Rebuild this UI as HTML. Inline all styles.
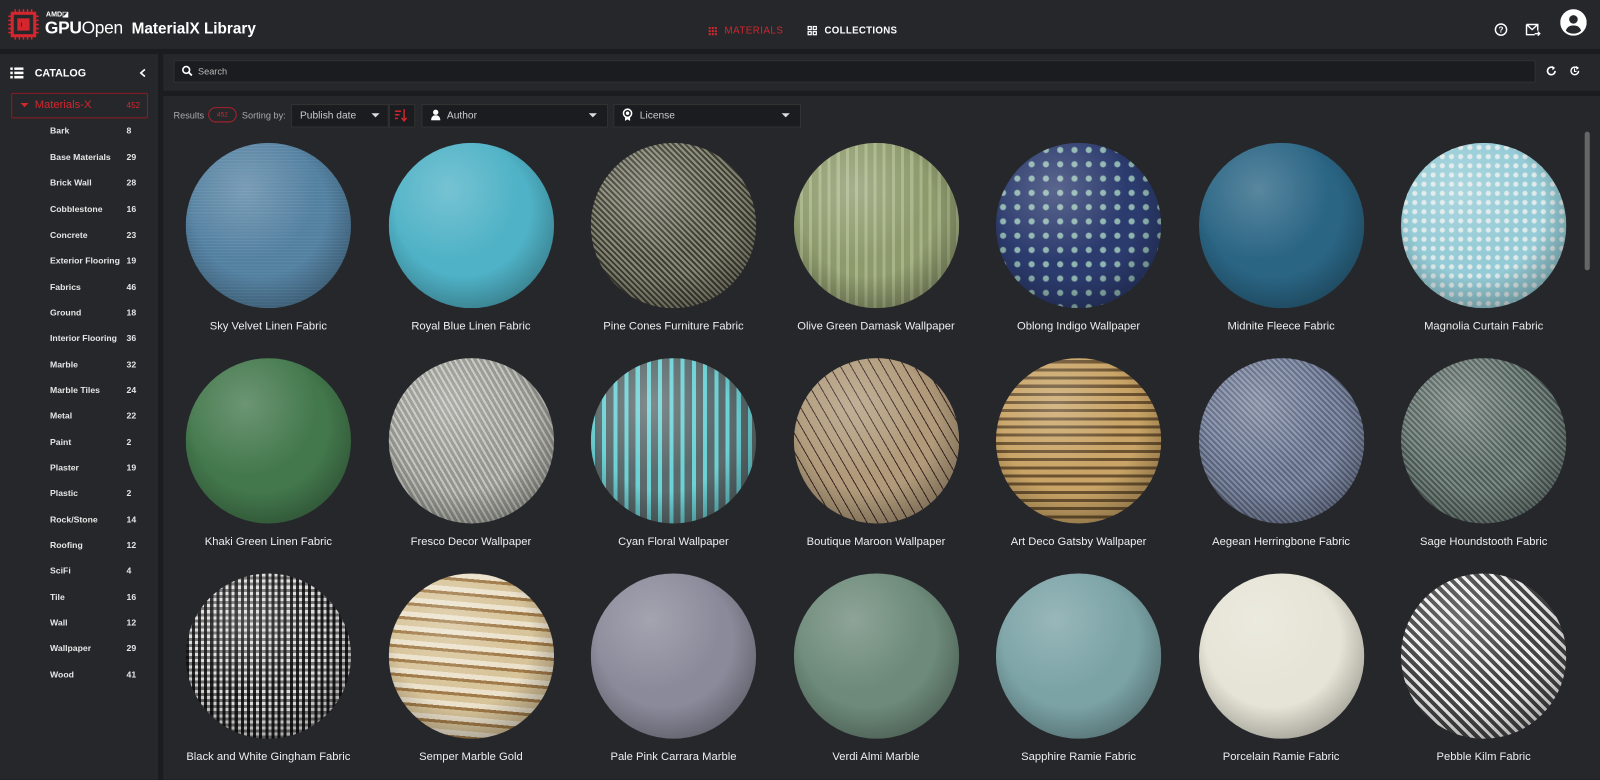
<!DOCTYPE html>
<html><head><meta charset="utf-8">
<style>
*{box-sizing:border-box;margin:0;padding:0}
html,body{width:1600px;height:779px;overflow:hidden;background:#1b1c1f}
#w{position:absolute;left:0;top:0;width:1568px;height:764px;transform:scale(1.0204);transform-origin:0 0;font-family:"Liberation Sans",sans-serif;color:#e8e8e8}
.hdr{position:absolute;left:0;top:0;width:1568px;height:48px;background:#26272b}
.side{position:absolute;left:0;top:53px;width:155px;height:711px;background:#26272b}
.srch{position:absolute;left:160px;top:53px;width:1408px;height:36px;background:#26272b}
.main{position:absolute;left:160px;top:94px;width:1408px;height:670px;background:#26272b}
.abs{position:absolute}
.cat{position:absolute;left:49px;font-size:8.5px;font-weight:bold;color:#e6e6e6}
.cnt{position:absolute;left:124px;font-size:8.5px;font-weight:bold;color:#e6e6e6}
.sp{position:absolute;width:162px;height:162px;border-radius:50%}
.lbl{position:absolute;width:200px;text-align:center;font-size:11px;color:#eee}
.sel{position:absolute;top:102px;height:23px;background:#1b1c1f;border:1px solid #333;font-size:10px;color:#ccc;line-height:21px;padding-left:8px}
.tri{position:absolute;width:0;height:0;border-left:4px solid transparent;border-right:4px solid transparent;border-top:4px solid #ddd}
</style></head><body><div id="w">
<div class="hdr"></div>
<svg class="abs" style="left:8px;top:9px" width="30" height="30" viewBox="0 0 30 30">
<rect x="4" y="4" width="22" height="22" fill="none" stroke="#d4262c" stroke-width="3"/>
<rect x="9" y="9" width="12" height="12" fill="#d4262c"/>
<g stroke="#d4262c" stroke-width="1.5">
<path d="M7 0v3M11 0v3M15 0v3M19 0v3M23 0v3M7 27v3M11 27v3M15 27v3M19 27v3M23 27v3M0 7h3M0 11h3M0 15h3M0 19h3M0 23h3M27 7h3M27 11h3M27 15h3M27 19h3M27 23h3"/></g>
<path d="M13 13v4" stroke="#26272b" stroke-width="1"/></svg>
<div class="abs" style="left:45px;top:10px;font-size:7px;font-weight:bold;color:#fff">AMD◪</div>
<div class="abs" style="left:44px;top:18px;font-size:17px;color:#fff;letter-spacing:-0.3px"><b>GPU</b>Open</div>
<div class="abs" style="left:129px;top:20px;font-size:15px;font-weight:bold;color:#fff">MaterialX Library</div>
<div class="abs" style="left:694px;top:26px;width:9px;height:9px;background:radial-gradient(circle,#d4262c 1px,transparent 1.2px) 0 0/3px 3px"></div>
<div class="abs" style="left:710px;top:25px;font-size:9.5px;color:#d4262c;letter-spacing:.5px">MATERIALS</div>
<svg class="abs" style="left:791px;top:25px" width="10" height="10"><g fill="none" stroke="#fff" stroke-width="1.2"><rect x="1" y="1" width="3" height="3"/><rect x="6" y="1" width="3" height="3"/><rect x="1" y="6" width="3" height="3"/><rect x="6" y="6" width="3" height="3"/></g></svg>
<div class="abs" style="left:808px;top:25px;font-size:9.5px;font-weight:bold;color:#fff;letter-spacing:.3px">COLLECTIONS</div>
<svg class="abs" style="left:1464px;top:22px" width="14" height="14"><circle cx="7" cy="7" r="5.5" fill="none" stroke="#fff" stroke-width="1.4"/><text x="7" y="10" font-size="8" font-weight="bold" fill="#fff" text-anchor="middle" font-family="Liberation Sans">?</text></svg>
<svg class="abs" style="left:1495px;top:23px" width="15" height="13"><path d="M1 1h11v6M1 1v10h8M1 1l5.5 5 5.5-5" fill="none" stroke="#fff" stroke-width="1.4"/><path d="M9 10h5M12 8l2 2-2 2" fill="none" stroke="#fff" stroke-width="1.3"/></svg>
<svg class="abs" style="left:1529px;top:9px" width="26" height="26"><circle cx="13" cy="13" r="13" fill="#fff"/><circle cx="13" cy="10" r="4.2" fill="#26272b"/><path d="M5.5 21c1.5-4 4-5 7.5-5s6 1 7.5 5c-2 2-4.5 3-7.5 3s-5.5-1-7.5-3z" fill="#26272b"/></svg>

<div class="side"></div>
<svg class="abs" style="left:10px;top:66px" width="13" height="11"><g fill="#fff"><rect x="0" y="0" width="2.5" height="2.5"/><rect x="4" y="0" width="9" height="2.5"/><rect x="0" y="4.2" width="2.5" height="2.5"/><rect x="4" y="4.2" width="9" height="2.5"/><rect x="0" y="8.4" width="2.5" height="2.5"/><rect x="4" y="8.4" width="9" height="2.5"/></g></svg>
<div class="abs" style="left:34px;top:66px;font-size:10.5px;font-weight:bold;color:#fff">CATALOG</div>
<svg class="abs" style="left:136px;top:67px" width="8" height="9"><path d="M6 1L2 4.5 6 8" fill="none" stroke="#fff" stroke-width="1.6"/></svg>
<div class="abs" style="left:11px;top:91px;width:134px;height:25px;border:1px solid #8b1e24;border-radius:2px"></div>
<div class="tri" style="left:20px;top:101px;border-top-color:#d4262c"></div>
<div class="abs" style="left:34px;top:97px;font-size:11px;color:#d4262c">Materials-X</div>
<div class="abs" style="left:124px;top:99px;font-size:8px;color:#d4262c">452</div>
<div class="cat" style="top:123px">Bark</div><div class="cnt" style="top:123px">8</div>
<div class="cat" style="top:149px">Base Materials</div><div class="cnt" style="top:149px">29</div>
<div class="cat" style="top:174px">Brick Wall</div><div class="cnt" style="top:174px">28</div>
<div class="cat" style="top:200px">Cobblestone</div><div class="cnt" style="top:200px">16</div>
<div class="cat" style="top:225px">Concrete</div><div class="cnt" style="top:225px">23</div>
<div class="cat" style="top:250px">Exterior Flooring</div><div class="cnt" style="top:250px">19</div>
<div class="cat" style="top:276px">Fabrics</div><div class="cnt" style="top:276px">46</div>
<div class="cat" style="top:301px">Ground</div><div class="cnt" style="top:301px">18</div>
<div class="cat" style="top:326px">Interior Flooring</div><div class="cnt" style="top:326px">36</div>
<div class="cat" style="top:352px">Marble</div><div class="cnt" style="top:352px">32</div>
<div class="cat" style="top:377px">Marble Tiles</div><div class="cnt" style="top:377px">24</div>
<div class="cat" style="top:402px">Metal</div><div class="cnt" style="top:402px">22</div>
<div class="cat" style="top:428px">Paint</div><div class="cnt" style="top:428px">2</div>
<div class="cat" style="top:453px">Plaster</div><div class="cnt" style="top:453px">19</div>
<div class="cat" style="top:478px">Plastic</div><div class="cnt" style="top:478px">2</div>
<div class="cat" style="top:504px">Rock/Stone</div><div class="cnt" style="top:504px">14</div>
<div class="cat" style="top:529px">Roofing</div><div class="cnt" style="top:529px">12</div>
<div class="cat" style="top:554px">SciFi</div><div class="cnt" style="top:554px">4</div>
<div class="cat" style="top:580px">Tile</div><div class="cnt" style="top:580px">16</div>
<div class="cat" style="top:605px">Wall</div><div class="cnt" style="top:605px">12</div>
<div class="cat" style="top:630px">Wallpaper</div><div class="cnt" style="top:630px">29</div>
<div class="cat" style="top:656px">Wood</div><div class="cnt" style="top:656px">41</div>

<div class="srch"></div>
<div class="abs" style="left:170px;top:59px;width:1335px;height:22px;background:#1b1c1f;border:1px solid #333"></div>
<svg class="abs" style="left:178px;top:64px" width="11" height="11"><circle cx="4.5" cy="4.5" r="3.3" fill="none" stroke="#fff" stroke-width="1.6"/><path d="M7 7l3 3" stroke="#fff" stroke-width="1.8"/></svg>
<div class="abs" style="left:194px;top:65px;font-size:9px;color:#bbb">Search</div>
<svg class="abs" style="left:1515px;top:64px" width="11" height="11"><path d="M9 5.5A3.7 3.7 0 1 1 7.5 2.5" fill="none" stroke="#fff" stroke-width="1.6"/><path d="M6 0.5l3 2-2.5 2.5z" fill="#fff"/></svg>
<svg class="abs" style="left:1538px;top:64px" width="11" height="11"><path d="M9 5.5A3.7 3.7 0 1 1 7.5 2.5" fill="none" stroke="#fff" stroke-width="1.4"/><path d="M5 3v3h2" fill="none" stroke="#fff" stroke-width="1.1"/><path d="M6.5 0.5l3 2-2.5 2z" fill="#fff"/></svg>

<div class="main"></div>
<div class="abs" style="left:170px;top:108px;font-size:9px;color:#aaa">Results</div>
<div class="abs" style="left:204px;top:105px;width:28px;height:15px;border:1px solid #a8222a;border-radius:8px;font-size:6.5px;color:#d4262c;text-align:center;line-height:13px">452</div>
<div class="abs" style="left:237px;top:108px;font-size:9px;color:#aaa">Sorting by:</div>
<div class="sel" style="left:285px;width:96px">Publish date</div>
<div class="tri" style="left:364px;top:111px"></div>
<div class="abs" style="left:381px;top:102px;width:26px;height:23px;background:#1b1c1f;border:1px solid #333"></div>
<svg class="abs" style="left:386px;top:106px" width="14" height="14"><path d="M1 3h6M1 6.5h4.5M1 10h3" stroke="#d4262c" stroke-width="1.5"/><path d="M10 1v11M7.5 9.5L10 12.5l2.5-3" fill="none" stroke="#d4262c" stroke-width="1.4"/></svg>
<div class="sel" style="left:413px;width:183px;padding-left:24px">Author</div>
<svg class="abs" style="left:422px;top:107px" width="10" height="11"><circle cx="5" cy="3" r="2.6" fill="#fff"/><path d="M0.5 11c0-3.5 2-5 4.5-5s4.5 1.5 4.5 5z" fill="#fff"/></svg>
<div class="tri" style="left:577px;top:111px"></div>
<div class="sel" style="left:601px;width:184px;padding-left:25px">License</div>
<svg class="abs" style="left:610px;top:106px" width="10" height="13"><circle cx="5" cy="5" r="4" fill="none" stroke="#fff" stroke-width="1.5"/><circle cx="5" cy="5" r="1.7" fill="#fff"/><path d="M2.5 8.5v4l2.5-1.5 2.5 1.5v-4" fill="#fff"/></svg>
<div class="tri" style="left:766px;top:111px"></div>
<div class="abs" style="left:1553px;top:129px;width:5px;height:136px;background:#666;border-radius:3px"></div>

<div id="g"></div>
</div>
<script>
var hl="radial-gradient(circle at 36% 28%,rgba(255,255,255,.22),rgba(255,255,255,0) 45%),radial-gradient(circle at 45% 40%,rgba(0,0,0,0) 50%,rgba(0,0,0,.5) 100%),";
var d=[
["Sky Velvet Linen Fabric","repeating-linear-gradient(0deg,#5d87a8 0 1px,#52809f 1px 3px)"],
["Royal Blue Linen Fabric","#4fb2c6"],
["Pine Cones Furniture Fabric","repeating-linear-gradient(45deg,#8a8a78 0 2px,#3d3d33 2px 4px),#777"],
["Olive Green Damask Wallpaper","repeating-linear-gradient(90deg,#8d9a6c 0 6px,#a8b488 6px 9px)"],
["Oblong Indigo Wallpaper","radial-gradient(circle,#8fb5b0 2.5px,#2c3b6e 3.5px) 0 0/14px 14px"],
["Midnite Fleece Fabric","#2a6584"],
["Magnolia Curtain Fabric","radial-gradient(circle,#dfeaea 2px,transparent 3px) 0 0/9px 9px,#94cbd6"],
["Khaki Green Linen Fabric","#43784c"],
["Fresco Decor Wallpaper","repeating-linear-gradient(60deg,#c5c5c0 0 2px,#95958f 2px 5px),#aaa"],
["Cyan Floral Wallpaper","repeating-linear-gradient(90deg,#6bd2d6 0 4px,#5b6a6c 4px 11px)"],
["Boutique Maroon Wallpaper","repeating-linear-gradient(60deg,#b09a7a 0 8px,#3d2a25 8px 9px),#a18a6a"],
["Art Deco Gatsby Wallpaper","repeating-linear-gradient(0deg,#c9a466 0 5px,#6c5230 5px 8px)"],
["Aegean Herringbone Fabric","repeating-linear-gradient(45deg,#8590a8 0 2px,#5d6680 2px 4px)"],
["Sage Houndstooth Fabric","repeating-linear-gradient(45deg,#7b8b86 0 2px,#4f5b57 2px 4px)"],
["Black and White Gingham Fabric","repeating-linear-gradient(0deg,rgba(0,0,0,.5) 0 3px,transparent 3px 6px),repeating-linear-gradient(90deg,#222 0 3px,#ddd 3px 6px)"],
["Semper Marble Gold","repeating-linear-gradient(5deg,#d8c49a 0 6px,#a07a48 6px 9px,#ece2cc 9px 14px)"],
["Pale Pink Carrara Marble","#8a8a9a"],
["Verdi Almi Marble","#6d8a7a"],
["Sapphire Ramie Fabric","#7ba3a6"],
["Porcelain Ramie Fabric","#e6e4d6"],
["Pebble Kilm Fabric","repeating-linear-gradient(45deg,#eee 0 3px,#444 3px 7px)"]];
var h="";
for(var i=0;i<21;i++){var c=i%7,r=Math.floor(i/7);var cx=263+c*198.5,cy=221+r*211;
h+='<div class="sp" style="left:'+(cx-81)+'px;top:'+(cy-81)+'px;background:'+hl+d[i][1]+'"></div>';
h+='<div class="lbl" style="left:'+(cx-100)+'px;top:'+(cy+93)+'px">'+d[i][0]+'</div>';}
document.getElementById("g").innerHTML=h;
</script>
</body></html>
